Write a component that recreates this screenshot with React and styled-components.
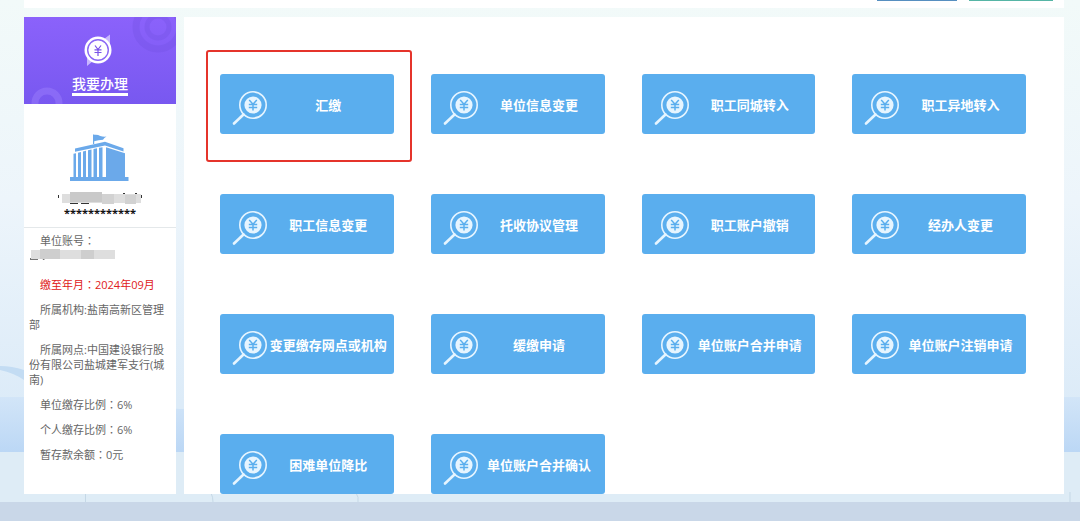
import styled, { createGlobalStyle } from 'styled-components'

const GlobalStyle = createGlobalStyle`
  * {
    box-sizing: border-box;
  }
  body {
    margin: 0;
    background: #c9d7e8;
    color: #666;
    font-family: 'Open Sans', 'Noto Sans CJK SC', sans-serif;
    font-size: 11px;
    line-height: 15px;
  }
`

const Page = styled.div`
  display: grid;
`
const Backdrop = styled.svg`
  grid-area: 1 / 1;
  width: 100%;
  height: 100%;
  min-height: 0;
`
const Content = styled.div`
  grid-area: 1 / 1;
  display: flex;
  flex-direction: column;
  gap: 9px;
  padding: 0 16px 8px 24px;
`
const TopBar = styled.div`
  display: flex;
  justify-content: flex-end;
  gap: 12px;
  height: 8px;
  padding-right: 11px;
  background: #fff;
`
const TopTab = styled.div`
  width: ${(props) => props.$width}px;
  height: 1px;
  background: ${(props) => props.$color};
`
const Body = styled.div`
  display: flex;
  gap: 8px;
`
const Sidebar = styled.aside`
  flex: none;
  width: 152px;
  background: #fff;
`
const Banner = styled.div`
  display: grid;
  height: 87px;
  background: linear-gradient(#8b62fb, #7858f0);
`
const BannerArt = styled.svg`
  grid-area: 1 / 1;
  width: 100%;
  height: 87px;
`
const BannerLink = styled.a`
  grid-area: 1 / 1;
  justify-self: center;
  align-self: end;
  margin-bottom: 8px;
  border-bottom: 3px solid #fff;
  color: #fff;
  font-size: 14px;
  font-weight: 500;
  line-height: 18px;
  text-decoration: none;
`
const Company = styled.div`
  display: flex;
  flex-direction: column;
  align-items: center;
  height: 124px;
  padding-top: 28px;
  border-bottom: 1px solid #e4e8ea;
`
const Building = styled.svg`
  width: 60px;
  height: 50px;
`
const NameMask = styled.svg`
  width: 86px;
  height: 14px;
  margin-top: 9px;
`
const Stars = styled.div`
  color: #111;
  font-weight: 700;
`
const Info = styled.div`
  display: flex;
  flex-direction: column;
  gap: 10px;
  padding: 5px 5px 0;
`
const InfoLine = styled.p`
  margin: 0;
  color: ${(props) => (props.$red ? '#e02020' : '#666')};
  text-indent: 11px;
`
/* the TC face centres the full-width colon */
const Colon = styled.span`
  font-family: 'Noto Sans CJK TC', sans-serif;
`
const AccountMask = styled.svg`
  display: block;
  width: 90px;
  height: 14px;
  margin-bottom: 5px;
`
const Panel = styled.main`
  flex: 1;
  min-width: 0;
  padding: 57px 38px 0 36px;
  background: #fff;
`
const Grid = styled.div`
  display: grid;
  grid-template-columns: repeat(4, 1fr);
  gap: 60px 37px;
`
const Cell = styled.div`
  display: grid;
`
const Highlight = styled.div`
  grid-area: 1 / 1;
  margin: -24px -18px -28px -14px;
  border: 2px solid #e5342b;
  border-radius: 3px;
`
const Tile = styled.button`
  grid-area: 1 / 1;
  display: flex;
  align-items: center;
  height: 60px;
  padding: 0 5px 0 11px;
  border: 0;
  border-radius: 3px;
  background: #5aaeee;
  color: #fff;
  font-family: 'Noto Sans CJK SC', sans-serif;
  font-size: 13px;
  font-weight: 700;
  line-height: 20px;
  white-space: nowrap;
  cursor: pointer;
`
const TileText = styled.span`
  flex: 1;
  padding-top: 2px;
  text-align: center;
`
const Magnifier = styled.svg`
  flex: none;
  width: 37px;
  height: 36px;
  margin-top: 8px;
`

const tiles = [
  '汇缴',
  '单位信息变更',
  '职工同城转入',
  '职工异地转入',
  '职工信息变更',
  '托收协议管理',
  '职工账户撤销',
  '经办人变更',
  '变更缴存网点或机构',
  '缓缴申请',
  '单位账户合并申请',
  '单位账户注销申请',
  '困难单位降比',
  '单位账户合并确认',
]

const MagnifierIcon = () => (
  <Magnifier viewBox="0 0 37 36" fill="none" aria-hidden="true">
    <circle cx="22" cy="15" r="13.2" stroke="#e6f5ff" strokeWidth="1.6" />
    <circle cx="22" cy="15" r="8.6" fill="#e6f5ff" />
    <path d="M12.5 24.5 3 33.5" stroke="#e6f5ff" strokeWidth="2.6" strokeLinecap="round" />
    <path
      d="M18.2 10 22 14.2 25.8 10M22 14.2v6.3M17.8 14.4h8.4M17.8 17.4h8.4"
      stroke="#5aaeee"
      strokeWidth="1.5"
    />
  </Magnifier>
)

const Sky = () => (
  <Backdrop viewBox="0 0 1080 502" preserveAspectRatio="none" aria-hidden="true">
    <defs>
      <linearGradient id="sky" x1="0" y1="0" x2="0" y2="1">
        <stop offset="0" stopColor="#f2faf9" />
        <stop offset="0.4" stopColor="#edf5fb" />
        <stop offset="0.8" stopColor="#dcebf8" />
        <stop offset="1" stopColor="#dcebf6" />
      </linearGradient>
      <linearGradient id="sea" x1="0" y1="0" x2="0" y2="1">
        <stop offset="0" stopColor="#d2e5f8" />
        <stop offset="1" stopColor="#bbd7f5" />
      </linearGradient>
    </defs>
    <rect width="1080" height="502" fill="url(#sky)" />
    <path d="M0 366q12 0 24 4v10q-10-7-24-10z" fill="#c3dcf3" />
    <path d="M0 397h24l156 12 884-12h16v56H0z" fill="url(#sea)" />
    <rect y="452" width="1080" height="50" fill="#deecf6" />
    <path d="M85.5 493v9M211 493q2 4 2 9M356 493q3 4 2 9M1070 492v10" stroke="#c5d8e6" fill="none" />
  </Backdrop>
)

const BannerIcon = () => (
  <BannerArt viewBox="0 0 152 87" fill="none" aria-hidden="true">
    <g stroke="#7150e2" opacity=".3">
      <circle cx="134" cy="10" r="22" strokeWidth="7" />
      <circle cx="134" cy="10" r="11" strokeWidth="5" />
    </g>
    <circle cx="23" cy="86" r="12" stroke="#9a7cfb" strokeWidth="7" opacity=".5" />
    <path d="M80 22 86 17.500V32zM69 44l-6 5V34z" fill="#c8b6ff" />
    <circle cx="74" cy="33" r="13.5" fill="#fff" />
    <circle cx="74" cy="33" r="10.3" stroke="#8b68f5" strokeWidth="1.4" />
    <path
      d="M71 28.500l3 4 3-4M74 32.500v6.500M70.500 32.800h7M70.500 35.500h7"
      stroke="#7954e8"
      strokeWidth="1.2"
    />
  </BannerArt>
)

const BuildingIcon = () => (
  <Building viewBox="1 0 60 50" fill="#6ba9ea" aria-hidden="true">
    <path d="M24 2.500h1.200V12H24zM25.200 2.800q3.500-.6 6 1.200 3 1 6.300.6-2.500 1.200-3.500 3.200-4.500.2-8.800 1.400z" />
    <path d="M6 16.500 36 9.800l18.500 6.400v3.200L36 13.400 6 19.800z" />
    <path d="M37 15.300 56 21.200V45H37z" />
    <path d="M4.500 21.800 7 21.200V45H4.500zM9 20.700l3-.8V45H9zM14 19.500l3-.7V45h-3zM19 18.300l3.500-.8V45H19zM24.500 17l3.500-.8V45h-3.500zM30 15.800l3.500-.6V45H30z" />
    <path d="M1 45h58.500v4H1z" />
  </Building>
)

const App = () => {
  return (
    <>
      <GlobalStyle />
      <Page>
        <Sky />
        <Content>
          <TopBar>
            <TopTab $width={80} $color="#568fc0" />
            <TopTab $width={84} $color="#55b5a5" />
          </TopBar>
          <Body>
            <Sidebar>
              <Banner>
                <BannerIcon />
                <BannerLink href="#handle">我要办理</BannerLink>
              </Banner>
              <Company>
                <BuildingIcon />
                <NameMask viewBox="0 0 86 14" aria-hidden="true">
                  <path d="M1 4h1v3H1zM13 11h8v2h-8zM24 11h8v2h-8zM66 2h2v2h-2zM78 2h2v2h-2zM84 4h1v3h-1z" fill="#333" />
                  <path d="M5 3h79v9H5z" fill="#dedede" />
                  <path d="M13 1h32v10H13z" fill="#c9c9c9" />
                  <path d="M45 3h12v10H45zM68 4h11v9H68z" fill="#d2d2d2" />
                </NameMask>
                <Stars>************</Stars>
              </Company>
              <Info>
                <div>
                  <InfoLine>
                    单位账号<Colon>：</Colon>
                  </InfoLine>
                  <AccountMask viewBox="0 0 90 14" aria-hidden="true">
                    <path d="M1 10h8v2H1zM13 9l3 3h-2z" fill="#777" />
                    <path d="M2 2h84v9H2z" fill="#dedede" />
                    <path d="M11 1h20v10H11zM52 2h13v9H52z" fill="#cecece" />
                  </AccountMask>
                </div>
                <InfoLine $red>
                  缴至年月<Colon>：</Colon>2024年09月
                </InfoLine>
                <InfoLine>所属机构:盐南高新区管理部</InfoLine>
                <InfoLine>所属网点:中国建设银行股份有限公司盐城建军支行(城南)</InfoLine>
                <InfoLine>
                  单位缴存比例<Colon>：</Colon>6%
                </InfoLine>
                <InfoLine>
                  个人缴存比例<Colon>：</Colon>6%
                </InfoLine>
                <InfoLine>
                  暂存款余额<Colon>：</Colon>0元
                </InfoLine>
              </Info>
            </Sidebar>
            <Panel>
              <Grid>
                {tiles.map((name, index) => (
                  <Cell key={name}>
                    {index === 0 && <Highlight />}
                    <Tile type="button">
                      <MagnifierIcon />
                      <TileText>{name}</TileText>
                    </Tile>
                  </Cell>
                ))}
              </Grid>
            </Panel>
          </Body>
        </Content>
      </Page>
    </>
  )
}

export default App
